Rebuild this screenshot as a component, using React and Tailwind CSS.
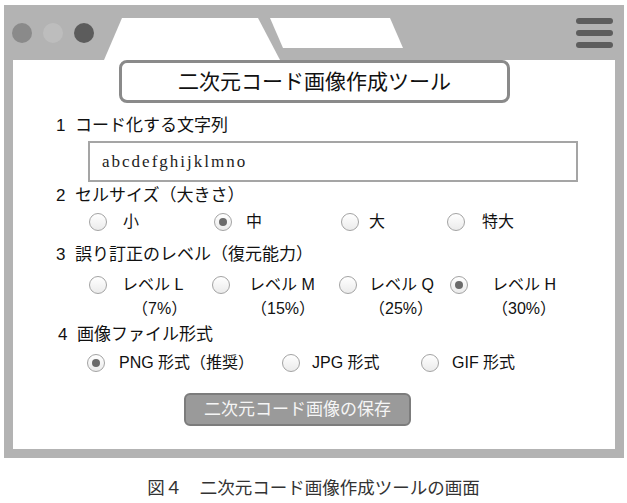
import React from "react";

function Radio({ checked }) {
  return (
    <span className="relative flex h-[18px] w-[18px] shrink-0 items-center justify-center rounded-full border border-[#a3a3a3] bg-gradient-to-b from-[#ffffff] to-[#ebebeb]">
      {checked && <span className="h-[8px] w-[8px] rounded-full bg-[#6b6b6b]" />}
    </span>
  );
}

function BrowserTabs() {
  return (
    <svg width="310" height="42" viewBox="0 0 310 42" className="ml-[6px] shrink-0 self-end">
      <polygon points="22,0 158,0 180,42 4,42" fill="#ffffff" />
      <polygon points="170,0 290,0 303,30 183,30" fill="#ffffff" />
    </svg>
  );
}

export default function App() {
  return (
    <div className="w-[627px] h-[503px] bg-white pt-[5px] font-['Liberation_Sans','Noto_Sans_CJK_JP',sans-serif] text-[#111]">
      {/* window frame */}
      <div className="ml-[4px] w-[620px] bg-[#b3b3b3] px-[9px] pb-[9px]">
        {/* title bar */}
        <div className="-mx-[9px] flex h-[55px]">
          <div className="ml-[8px] mt-[18px] flex gap-[11px] self-start">
            <span className="h-[20px] w-[20px] rounded-full bg-[#8a8a8a]" />
            <span className="h-[20px] w-[20px] rounded-full bg-[#bdbdbd]" />
            <span className="h-[20px] w-[20px] rounded-full bg-[#5c5c5c]" />
          </div>
          <BrowserTabs />
          <div className="ml-auto mr-[11px] mt-[13px] flex flex-col gap-[6px] self-start">
            <span className="h-[6px] w-[37px] rounded-full bg-[#5d5d5d]" />
            <span className="h-[6px] w-[37px] rounded-full bg-[#5d5d5d]" />
            <span className="h-[6px] w-[37px] rounded-full bg-[#5d5d5d]" />
          </div>
        </div>

        {/* page content */}
        <div className="flex h-[389px] flex-col bg-white">
          <div className="ml-[106px] flex h-[43px] w-[391px] items-center justify-center rounded-[8px] border-[3px] border-[#8a8a8a] text-[21px] leading-[24px]">
            二次元コード画像作成ツール
          </div>

          <div className="ml-[43px] mt-[13px] text-[17px] leading-[20px]">
            <span className="inline-block w-[19px]">1</span>コード化する文字列
          </div>
          <div className="ml-[75px] mt-[5px] flex h-[41px] w-[490px] items-center border-2 border-[#a5a5a5] pl-[12px] font-['Liberation_Serif',serif] text-[17px] tracking-[2px] text-[#222]">
            abcdefghijklmno
          </div>

          <div className="ml-[43px] mt-[4px] text-[17px] leading-[20px]">
            <span className="inline-block w-[19px]">2</span>セルサイズ（大きさ）
          </div>
          <div className="mt-[6px] flex h-[20px] items-center pl-[76px] text-[16px] leading-[20px]">
            <div className="flex w-[125px] items-center gap-[16px]"><Radio />小</div>
            <div className="flex w-[127px] items-center gap-[14px]"><Radio checked />中</div>
            <div className="flex w-[106px] items-center gap-[10px]"><Radio />大</div>
            <div className="flex items-center gap-[17px]"><Radio />特大</div>
          </div>

          <div className="ml-[43px] mt-[13px] text-[17px] leading-[20px]">
            <span className="inline-block w-[19px]">3</span>誤り訂正のレベル（復元能力）
          </div>
          <div className="mt-[8px] flex pl-[76px] text-[16px] leading-[24px]">
            <div className="flex w-[123px] gap-[15px]">
              <div className="flex h-[24px] items-center"><Radio /></div>
              <div className="flex flex-col">
                <span>レベル L</span>
                <span className="pl-[10px]">（7%）</span>
              </div>
            </div>
            <div className="flex w-[127px] gap-[19px]">
              <div className="flex h-[24px] items-center"><Radio /></div>
              <div className="flex flex-col">
                <span>レベル M</span>
                <span className="pl-[2px]">（15%）</span>
              </div>
            </div>
            <div className="flex w-[111px] gap-[12px]">
              <div className="flex h-[24px] items-center"><Radio /></div>
              <div className="flex flex-col">
                <span>レベル Q</span>
                <span>（25%）</span>
              </div>
            </div>
            <div className="flex gap-[24px]">
              <div className="flex h-[24px] items-center"><Radio checked /></div>
              <div className="flex flex-col">
                <span>レベル H</span>
                <span>（30%）</span>
              </div>
            </div>
          </div>

          <div className="ml-[45px] mt-[4px] text-[17px] leading-[20px]">
            <span className="inline-block w-[19px]">4</span>画像ファイル形式
          </div>
          <div className="mt-[8px] flex h-[20px] items-center pl-[74px] text-[16px] leading-[20px]">
            <div className="flex w-[195px] items-center gap-[14px]"><Radio checked />PNG 形式（推奨）</div>
            <div className="flex w-[139px] items-center gap-[12px]"><Radio />JPG 形式</div>
            <div className="flex items-center gap-[13px]"><Radio />GIF 形式</div>
          </div>

          <div className="ml-[171px] mt-[20px] flex h-[33px] w-[227px] items-center justify-center rounded-[6px] border-2 border-[#7c7c7c] bg-[#9a9a9a] text-[17px] leading-[20px] text-[#f5f5f5]">
            二次元コード画像の保存
          </div>
        </div>
      </div>

      <div className="mt-[18px] text-center font-['Liberation_Serif','Noto_Sans_CJK_JP',serif] text-[17.5px] leading-[24px] text-[#333]">
        図４　二次元コード画像作成ツールの画面
      </div>
    </div>
  );
}
